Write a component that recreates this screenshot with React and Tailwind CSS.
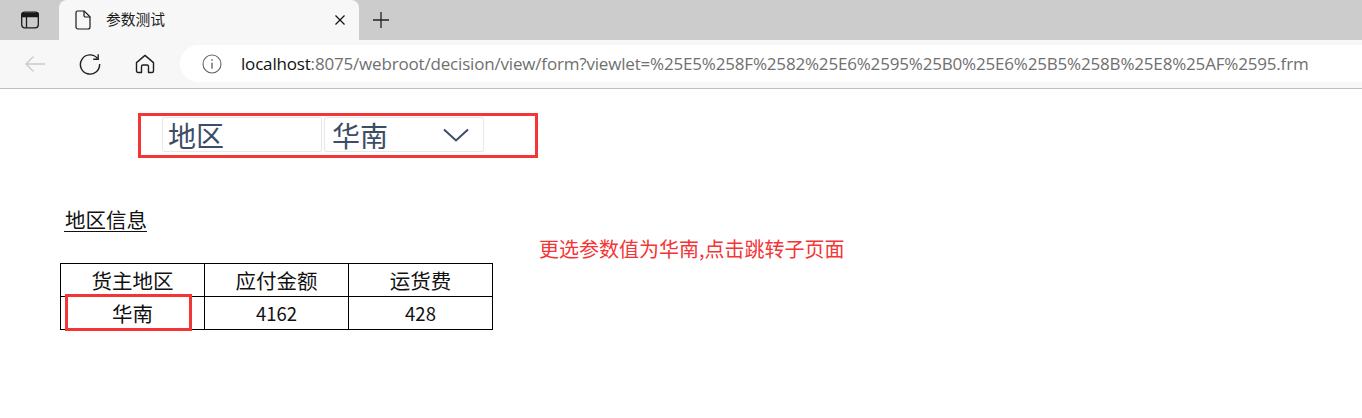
const cjk = '[font-family:"Noto_Sans_CJK_SC",sans-serif]'

function TabStrip() {
  return (
    <div className="flex h-10 bg-[#cccccc]">
      <div className="flex w-[59px] items-center justify-center">
        <svg width="20" height="20" viewBox="0 0 20 20" fill="none" stroke="#1a1a1a" strokeWidth="1.3">
          <rect x="1.7" y="2.2" width="16.6" height="15.6" rx="3" />
          <path d="M2 3.5h16v3H2z" fill="#1a1a1a" />
          <path d="M6.5 6v11.5" />
        </svg>
      </div>
      <div className="flex w-[300px] items-center rounded-t-lg bg-[#f7f7f7]">
        <svg className="ml-[16px]" width="16" height="20" viewBox="0 0 16 20" fill="none" stroke="#1a1a1a" strokeWidth="1.2">
          <path d="M2.5 1h6.7L15 6.8V17a2 2 0 0 1-2 2H3a2 2 0 0 1-2-2V2.5A1.5 1.5 0 0 1 2.5 1z" />
          <path d="M9 1v4.5A1.5 1.5 0 0 0 10.5 7H15" />
        </svg>
        <span className={`ml-[15px] flex-1 pb-[2px] text-[14.75px] text-[#1a1a1a] ${cjk}`}>参数测试</span>
        <svg className="mr-[14px]" width="10" height="10" viewBox="0 0 10 10" stroke="#111" strokeWidth="1.2">
          <path d="M0.5 0.5l9 9M9.5 0.5l-9 9" />
        </svg>
      </div>
      <div className="flex w-[44px] items-center justify-center">
        <svg width="18" height="18" viewBox="0 0 18 18" stroke="#222" strokeWidth="1.3">
          <path d="M9 1v16M1 9h16" />
        </svg>
      </div>
    </div>
  )
}

function Toolbar() {
  return (
    <div className="flex h-[49px] items-center border-b border-[#bdbdbd] bg-[#f7f7f7] pb-[1px]">
      <div className="flex w-[180px] shrink-0 items-center">
        <svg className="ml-[24px]" width="22" height="18" viewBox="0 0 22 18" fill="none" stroke="#c9c9c9" strokeWidth="1.3">
          <path d="M21 9H2M9.5 1.5L2 9l7.5 7.5" />
        </svg>
        <svg className="ml-[33px]" width="22" height="22" viewBox="0 0 22 22" fill="none" stroke="#1f1f1f" strokeWidth="1.4">
          <path d="M18.5 5.5A9.6 9.6 0 1 0 20.6 11" />
          <path d="M19.2 1.2v5h-5" />
        </svg>
        <svg className="ml-[34px]" width="20" height="20" viewBox="0 0 20 20" fill="none" stroke="#1f1f1f" strokeWidth="1.4" strokeLinejoin="round">
          <path d="M1.5 8.6L10 1.4l8.5 7.2v8.4a1.5 1.5 0 0 1-1.5 1.5h-3.5v-6a1.5 1.5 0 0 0-1.5-1.5H8a1.5 1.5 0 0 0-1.5 1.5v6H3a1.5 1.5 0 0 1-1.5-1.5z" />
        </svg>
      </div>
      <div className="flex h-[37px] flex-1 items-center rounded-l-[19px] bg-white pl-[22px]">
        <svg width="20" height="20" viewBox="0 0 20 20" fill="none" stroke="#666" strokeWidth="1.1">
          <circle cx="10" cy="10" r="9" />
          <path d="M10 8.7v6" strokeWidth="1.4" />
          <path d="M10 5.2v1.6" strokeWidth="1.5" />
        </svg>
        <span className="ml-[19px] whitespace-nowrap font-['Open_Sans',sans-serif] text-[17px] tracking-[-0.18px] text-[#6f6f6f]">
          <span className="text-[#111]">localhost</span>:8075/webroot/decision/view/form?viewlet=%25E5%258F%2582%25E6%2595%25B0%25E6%25B5%258B%25E8%25AF%2595.frm
        </span>
      </div>
    </div>
  )
}

function ParamBar() {
  const cell = 'flex h-[35px] w-[160px] items-center rounded-[2px] border border-[#e8e8e8] text-[28px] leading-none text-[#3d4d66]'
  return (
    <div className={`ml-[138px] mt-[24px] flex h-[45px] w-[400px] gap-[2px] border-[3px] border-[#f43535] pl-[21px] pt-[1px] ${cjk}`}>
      <div className={`${cell} pl-[5px]`}>地区</div>
      <div className={`${cell} justify-between pl-[7px] pr-[13px]`}>
        华南
        <svg className="mr-[1px]" width="26" height="14" viewBox="0 0 26 14" fill="none" stroke="#3d4d66" strokeWidth="2">
          <path d="M1 1.5l12 11 12-11" />
        </svg>
      </div>
    </div>
  )
}

function ReportTable() {
  const cells = [
    { text: '货主地区', size: 'text-[20.5px]' },
    { text: '应付金额', size: 'text-[20.5px]' },
    { text: '运货费', size: 'text-[20.5px]' },
    { text: '华南', size: 'text-[20.5px]' },
    { text: '4162', size: 'text-[18.5px]' },
    { text: '428', size: 'text-[18.5px]' },
  ]
  return (
    <div className="relative mt-[31px] w-[433px]">
      <div className="grid grid-cols-[144px_144px_144px] grid-rows-[33px_33px] border-l border-t border-black">
        {cells.map(cell => (
          <div key={cell.text} className={`flex items-center justify-center border-b border-r border-black leading-none text-[#111] ${cell.size}`}>
            {cell.text}
          </div>
        ))}
      </div>
      <div className="absolute left-[5px] top-[31px] h-[37px] w-[127px] border-[3px] border-[#f43535]" />
    </div>
  )
}

export default function App() {
  return (
    <div className="h-[418px] w-[1362px] overflow-hidden bg-white">
      <TabStrip />
      <Toolbar />
      <ParamBar />
      <div className={`ml-[60px] mt-[50px] flex items-start ${cjk}`}>
        <div>
          <div className="ml-[4px] w-[83px] border-b border-[#111] pl-[1px] text-[20.5px] leading-[23px] text-[#111]">地区信息</div>
          <ReportTable />
        </div>
        <div className="ml-[46px] mt-[28px] text-[20px] leading-[26px] text-[#f43535]">更选参数值为华南,点击跳转子页面</div>
      </div>
    </div>
  )
}
